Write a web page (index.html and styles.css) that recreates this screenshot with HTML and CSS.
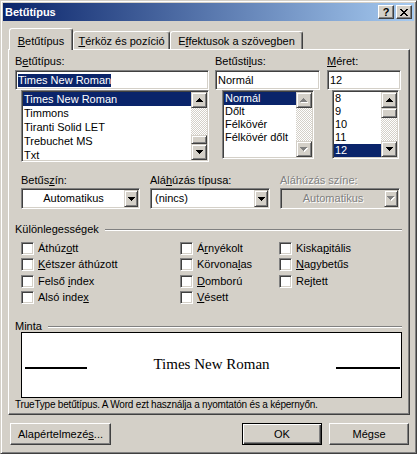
FILE: index.html
```html
<!DOCTYPE html>
<html lang="hu">
<head>
<meta charset="utf-8">
<title>Betűtípus</title>
<link rel="stylesheet" href="styles.css">
</head>
<body>
<div class="window">
  <div class="titlebar">
    <span class="title">Betűtípus</span>
    <div class="tbtns">
      <span class="tbtn help">?</span>
      <span class="tbtn"><svg width="8" height="7" viewBox="0 0 8 7" shape-rendering="crispEdges"><path d="M0 0h2v1H0z M6 0h2v1H6z M1 1h2v1H1z M5 1h2v1H5z M2 2h4v1H2z M3 3h2v1H3z M2 4h4v1H2z M1 5h2v1H1z M5 5h2v1H5z M0 6h2v1H0z M6 6h2v1H6z"/></svg></span>
    </div>
  </div>

  <div class="tabs">
    <div class="tab active t1"><span><u>B</u>etűtípus</span></div>
    <div class="tab t2"><span><u>T</u>érköz és pozíció</span></div>
    <div class="tab t3"><span>E<u>f</u>fektusok a szövegben</span></div>
  </div>

  <div class="panel">
    <div class="fontrow">
      <div class="col c1">
        <div class="lbl">B<u>e</u>tűtípus:</div>
        <div class="input"><span class="hl">Times New Roman</span></div>
        <div class="list fontlist">
          <div class="items">
            <div class="item sel">Times New Roman</div>
            <div class="item">Timmons</div>
            <div class="item">Tiranti Solid LET</div>
            <div class="item">Trebuchet MS</div>
            <div class="item">Txt</div>
          </div>
          <div class="sb">
            <div class="sbbtn"><svg width="7" height="4" viewBox="0 0 7 4" shape-rendering="crispEdges"><path d="M3 0h1v1h1v1h1v1h1v1H0V3h1V2h1V1h1z"/></svg></div>
            <div class="track"><div class="thumb th-font"></div></div>
            <div class="sbbtn"><svg width="7" height="4" viewBox="0 0 7 4" shape-rendering="crispEdges"><path d="M0 0h7v1H6v1H5v1H4v1H3V3H2V2H1V1H0z"/></svg></div>
          </div>
        </div>
      </div>
      <div class="col c2">
        <div class="lbl">Betűsti<u>l</u>us:</div>
        <div class="input">Normál</div>
        <div class="list stylelist">
          <div class="items">
            <div class="item sel">Normál</div>
            <div class="item">Dőlt</div>
            <div class="item">Félkövér</div>
            <div class="item">Félkövér dőlt</div>
          </div>
          <div class="sb">
            <div class="sbbtn"><svg width="8" height="5" viewBox="0 0 8 5" shape-rendering="crispEdges"><path fill="#fff" d="M4 1h1v1h1v1h1v1h1v1H1V4h1V3h1V2h1z"/><path fill="#808080" d="M3 0h1v1h1v1h1v1h1v1H0V3h1V2h1V1h1z"/></svg></div>
            <div class="track"></div>
            <div class="sbbtn"><svg width="8" height="5" viewBox="0 0 8 5" shape-rendering="crispEdges"><path fill="#fff" d="M1 1h7v1H7v1H6v1H5v1H4V4H3V3H2V2H1z"/><path fill="#808080" d="M0 0h7v1H6v1H5v1H4v1H3V3H2V2H1V1H0z"/></svg></div>
          </div>
        </div>
      </div>
      <div class="col c3">
        <div class="lbl"><u>M</u>éret:</div>
        <div class="input">12</div>
        <div class="list sizelist">
          <div class="items">
            <div class="item">8</div>
            <div class="item">9</div>
            <div class="item">10</div>
            <div class="item">11</div>
            <div class="item sel">12</div>
          </div>
          <div class="sb">
            <div class="sbbtn"><svg width="7" height="4" viewBox="0 0 7 4" shape-rendering="crispEdges"><path d="M3 0h1v1h1v1h1v1h1v1H0V3h1V2h1V1h1z"/></svg></div>
            <div class="track"><div class="thumb th-size"></div></div>
            <div class="sbbtn"><svg width="7" height="4" viewBox="0 0 7 4" shape-rendering="crispEdges"><path d="M0 0h7v1H6v1H5v1H4v1H3V3H2V2H1V1H0z"/></svg></div>
          </div>
        </div>
      </div>
    </div>

    <div class="comborow">
      <div class="cfield">
        <div class="lbl">Betűs<u>z</u>ín:</div>
        <div class="combo"><span class="cval center">Automatikus</span><span class="cbtn"><svg width="7" height="4" viewBox="0 0 7 4" shape-rendering="crispEdges"><path d="M0 0h7v1H6v1H5v1H4v1H3V3H2V2H1V1H0z"/></svg></span></div>
      </div>
      <div class="cfield">
        <div class="lbl">Alá<u>h</u>úzás típusa:</div>
        <div class="combo"><span class="cval">(nincs)</span><span class="cbtn"><svg width="7" height="4" viewBox="0 0 7 4" shape-rendering="crispEdges"><path d="M0 0h7v1H6v1H5v1H4v1H3V3H2V2H1V1H0z"/></svg></span></div>
      </div>
      <div class="cfield">
        <div class="lbl disabled">Aláhúzás színe:</div>
        <div class="combo dis"><span class="cval center disabled">Automatikus</span><span class="cbtn"><svg width="8" height="5" viewBox="0 0 8 5" shape-rendering="crispEdges"><path fill="#fff" d="M1 1h7v1H7v1H6v1H5v1H4V4H3V3H2V2H1z"/><path fill="#808080" d="M0 0h7v1H6v1H5v1H4v1H3V3H2V2H1V1H0z"/></svg></span></div>
      </div>
    </div>

    <div class="ghead g1"><span>Különlegességek</span><i class="etch"></i></div>
    <div class="checks">
      <label class="chk"><span class="box"></span><span>Áthúz<u>o</u>tt</span></label>
      <label class="chk"><span class="box"></span><span>Á<u>r</u>nyékolt</span></label>
      <label class="chk"><span class="box"></span><span>Kiska<u>p</u>itális</span></label>
      <label class="chk"><span class="box"></span><span><u>K</u>étszer áthúzott</span></label>
      <label class="chk"><span class="box"></span><span>Körvona<u>l</u>as</span></label>
      <label class="chk"><span class="box"></span><span><u>N</u>agybetűs</span></label>
      <label class="chk"><span class="box"></span><span>Felső <u>i</u>ndex</span></label>
      <label class="chk"><span class="box"></span><span><u>D</u>omború</span></label>
      <label class="chk"><span class="box"></span><span>Re<u>j</u>tett</span></label>
      <label class="chk"><span class="box"></span><span>Alsó inde<u>x</u></span></label>
      <label class="chk"><span class="box"></span><span><u>V</u>ésett</span></label>
    </div>

    <div class="ghead g2"><span>Minta</span><i class="etch"></i></div>
    <div class="preview">
      <i class="pline pl"></i>
      <span class="ptext">Times New Roman</span>
      <i class="pline pr"></i>
    </div>
    <div class="caption">TrueType betűtípus. A Word ezt használja a nyomtatón és a képernyőn.</div>
  </div>

  <div class="buttons">
    <div class="btn b-def">Alapértelmezé<u>s</u>...</div>
    <div class="btn b-ok">OK</div>
    <div class="btn b-cancel">Mégse</div>
  </div>
</div>
</body>
</html>
```
FILE: styles.css
```css
* { box-sizing: border-box; }
html, body { margin: 0; padding: 0; }
body {
  width: 417px;
  height: 454px;
  overflow: hidden;
  background: #d4d0c8;
  font-family: "Liberation Sans", Arial, sans-serif;
  font-size: 11px;
  line-height: 13px;
  color: #000;
}
u { text-decoration: underline; text-underline-offset: 1px; text-decoration-thickness: 1px; }

.window {
  width: 417px;
  height: 454px;
  background: #d4d0c8;
  border: 1px solid;
  border-color: #d4d0c8 #404040 #404040 #d4d0c8;
  box-shadow: inset 1px 1px #fff, inset -1px -1px #808080;
  padding: 2px;
  display: flex;
  flex-direction: column;
}

/* title bar */
.titlebar {
  height: 18px;
  flex: none;
  background: linear-gradient(to right, #0a246a, #a6caf0);
  display: flex;
  align-items: center;
  padding: 0 2px 0 2px;
}
.title { color: #fff; font-weight: bold; font-size: 11px; }
.tbtns { margin-left: auto; display: flex; gap: 2px; }
.tbtn {
  width: 16px;
  height: 14px;
  background: #d4d0c8;
  border: 1px solid;
  border-color: #fff #404040 #404040 #fff;
  box-shadow: inset -1px -1px #808080;
  display: flex;
  align-items: center;
  justify-content: center;
}
.tbtn.help { font-weight: bold; font-size: 11px; line-height: 11px; padding-top: 1px; }

/* tabs */
.tabs {
  position: relative;
  z-index: 1;
  flex: none;
  height: 21px;
  margin-top: 7px;
  padding-left: 6px;
  display: flex;
  align-items: flex-end;
}
.tab {
  height: 18px;
  background: #d4d0c8;
  border: 1px solid;
  border-bottom: none;
  border-color: #fff #404040 transparent #fff;
  border-radius: 3px 3px 0 0;
  box-shadow: inset -1px 0 #808080;
  display: flex;
  align-items: flex-end;
  justify-content: center;
  padding-bottom: 1px;
  white-space: nowrap;
}
.tab.active { height: 22px; margin-bottom: -1px; padding-bottom: 2px; }
.t1 { width: 64px; }
.t2 { width: 97px; }
.t3 { width: 133px; }

/* panel */
.panel {
  flex: none;
  height: 366px;
  margin: 0 4px 0 5px;
  border: 1px solid;
  border-color: #fff #404040 #404040 #fff;
  box-shadow: inset -1px -1px #808080;
  padding-top: 5px;
}

.lbl { height: 13px; white-space: nowrap; }
.disabled { color: #808080; text-shadow: 1px 1px 0 #fff; }

.fontrow { display: flex; padding-left: 6px; }
.col { display: flex; flex-direction: column; }
.c1 { width: 194px; }
.c2 { width: 105px; margin-left: 6px; }
.c3 { width: 74px; margin-left: 7px; }
.col .lbl { margin-bottom: 2px; }

.input, .list, .combo, .box {
  border: 1px solid;
  border-color: #808080 #fff #fff #808080;
  box-shadow: inset 1px 1px #404040, inset -1px -1px #d4d0c8;
}
.input {
  height: 20px;
  background: #fff;
  padding: 0 2px;
  display: flex;
  align-items: center;
  white-space: nowrap;
}
.hl { background: #0a246a; color: #fff; }

.list {
  background: #fff;
  padding: 1px;
  display: flex;
}
.fontlist { width: 188px; height: 72px; margin-left: 6px; }
.stylelist { width: 92px; height: 69px; margin-left: 7px; }
.sizelist { width: 67px; height: 69px; margin-left: 5px; }
.items { flex: 1; overflow: hidden; }
.item { height: 13px; line-height: 13px; padding-left: 1px; white-space: nowrap; }
.fontlist .item { height: 14px; line-height: 14px; }
.item.sel { background: #0a246a; color: #fff; }

.sb { width: 16px; flex: none; display: flex; flex-direction: column; }
.sbbtn, .thumb, .cbtn {
  background: #d4d0c8;
  border: 1px solid;
  border-color: #d4d0c8 #404040 #404040 #d4d0c8;
  box-shadow: inset 1px 1px #fff, inset -1px -1px #808080;
}
.sbbtn {
  height: 16px;
  flex: none;
  display: flex;
  align-items: center;
  justify-content: center;
}
.sbbtn svg { display: block; }
.track {
  flex: 1;
  background: repeating-conic-gradient(#fff 0 25%, #d4d0c8 0 50%) 0 0 / 2px 2px;
}
.thumb { width: 16px; }
.th-font { height: 9px; margin-top: 27px; }
.th-size { height: 10px; }

/* combos */
.comborow { display: flex; gap: 10px; padding-left: 12px; margin-top: 12px; }
.cfield { display: flex; flex-direction: column; }
.cfield .lbl { margin-bottom: 1px; }
.combo {
  width: 119px;
  height: 21px;
  background: #fff;
  padding: 1px;
  display: flex;
}
.cfield + .cfield .combo { width: 120px; }
.combo.dis { background: #d4d0c8; }
.cval { flex: 1; display: flex; align-items: center; padding-left: 3px; white-space: nowrap; }
.cval.center { justify-content: center; padding-left: 0; }
.cbtn {
  width: 14px;
  flex: none;
  display: flex;
  align-items: center;
  justify-content: center;
}
.cbtn svg { display: block; }

/* group headers */
.ghead {
  height: 12px;
  line-height: 12px;
  display: flex;
  align-items: center;
  padding-left: 6px;
  padding-right: 7px;
}
.g1 { margin-top: 14px; }
.g2 { margin-top: 14px; }
.etch {
  flex: 1;
  height: 2px;
  border-top: 1px solid #808080;
  border-bottom: 1px solid #fff;
  margin-left: 6px;
  margin-top: 1px;
}

/* checkboxes */
.checks {
  display: grid;
  grid-template-columns: 159px 99px 1fr;
  grid-auto-rows: 16.5px;
  padding-left: 12px;
  margin-top: 5px;
}
.chk { display: flex; align-items: center; gap: 4px; white-space: nowrap; }
.box { width: 13px; height: 13px; background: #fff; flex: none; }

/* preview */
.preview {
  width: 381px;
  height: 66px;
  margin-left: 12px;
  background: #fff;
  border: 1px solid #000;
  display: flex;
  align-items: baseline;
  padding-top: 23px;
}
.pline { height: 2px; background: #000; flex: none; }
.pl { width: 62px; margin-left: 3px; }
.pr { width: 64px; margin-right: 1px; }
.ptext {
  flex: 1;
  text-align: center;
  font-family: "Liberation Serif", "Times New Roman", serif;
  font-size: 15px;
  line-height: 17px;
}
.caption {
  padding-left: 6px;
  white-space: nowrap;
  font-size: 10px;
  letter-spacing: -0.2px;
  line-height: 13px;
}

/* buttons */
.buttons {
  flex: none;
  display: flex;
  margin-top: 8px;
  padding: 0 5px 0 7px;
}
.btn {
  height: 22px;
  background: #d4d0c8;
  border: 1px solid;
  border-color: #fff #404040 #404040 #fff;
  box-shadow: inset -1px -1px #808080;
  display: flex;
  align-items: center;
  justify-content: center;
  white-space: nowrap;
}
.b-def { width: 101px; }
.b-ok {
  width: 80px;
  margin-left: auto;
  border-color: #000;
  box-shadow: inset 1px 1px #fff, inset -1px -1px #404040, inset -2px -2px #808080;
}
.b-cancel { width: 80px; margin-left: 7px; }
```
